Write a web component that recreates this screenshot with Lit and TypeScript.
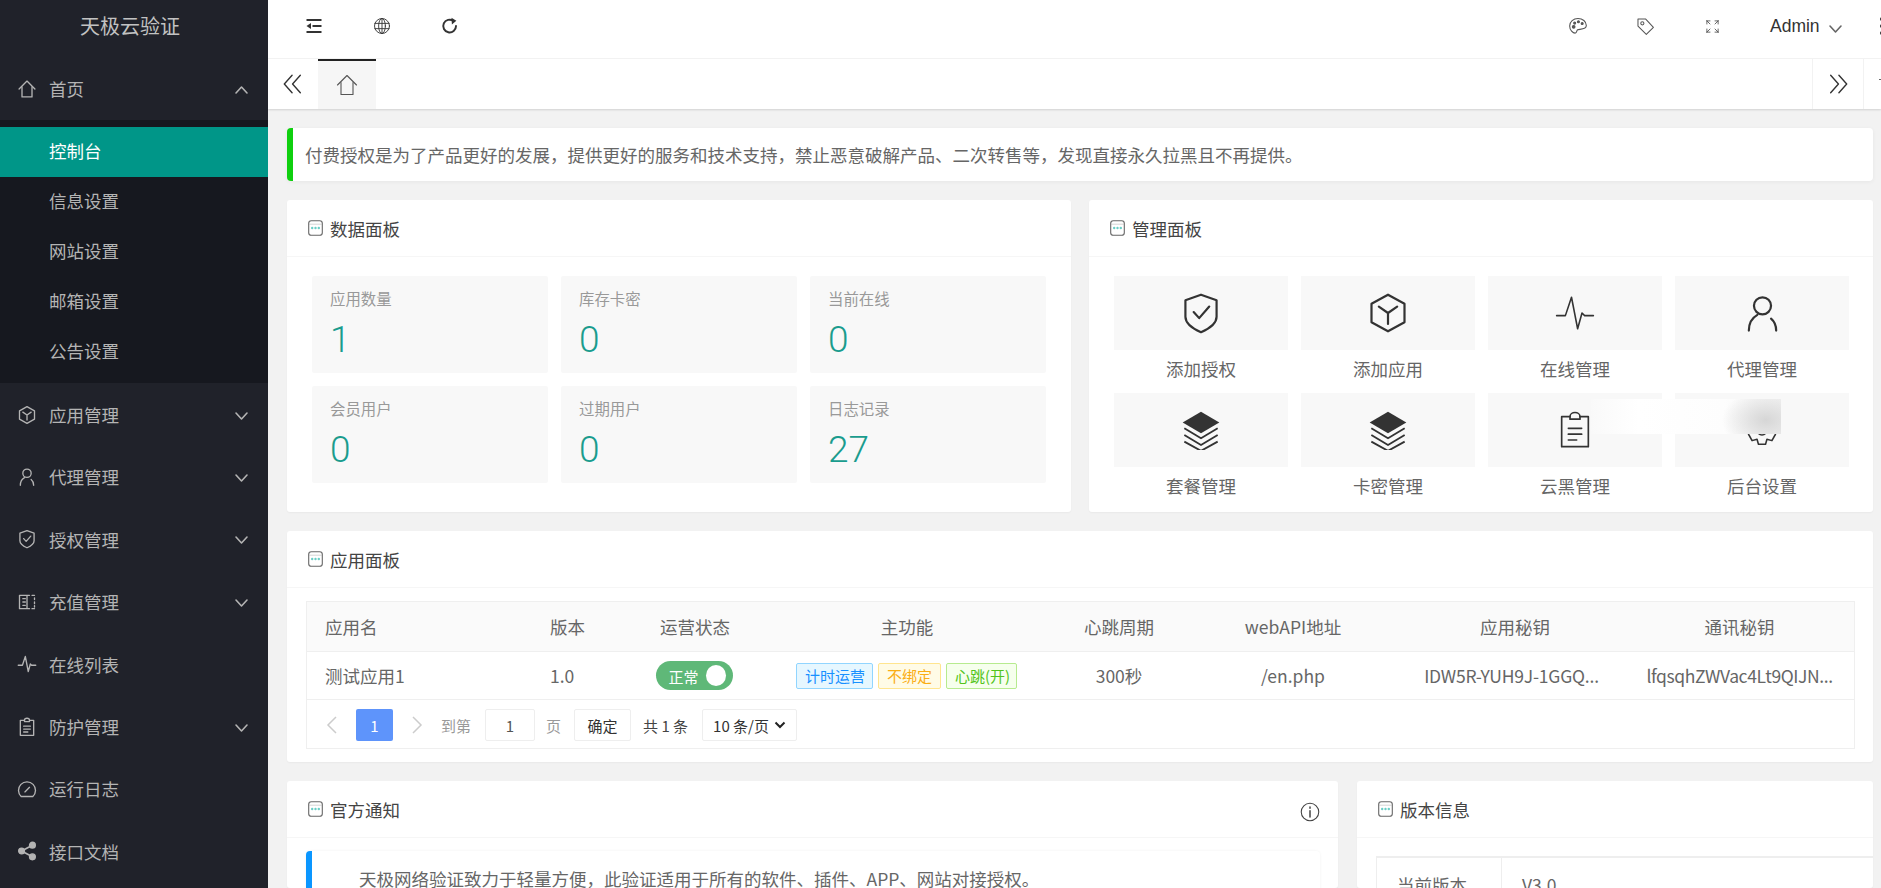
import { LitElement, html, css, svg } from "lit";
import { customElement } from "lit/decorators.js";

const S = (size: number, body: unknown, w = 1.6, vb = 24, h?: number) => html`<svg class="ic" width=${size} height=${h ?? size} viewBox="0 0 ${vb} ${vb}" fill="none" stroke="currentColor" stroke-width=${w} stroke-linecap="round" stroke-linejoin="round">${body}</svg>`;

const P: Record<string, unknown> = {
  home: svg`<path d="M2.5 12 12 2.5 21.5 12"/><path d="M6 9.5V21.5H18V9.5"/>`,
  cube: svg`<path d="M12 2 21 7V17L12 22 3 17V7Z"/><path d="M7 8.5 12 12 17 8.5M12 12V18"/>`,
  user: svg`<circle cx="12" cy="7.5" r="5"/><path d="M4 22C4 17.5 6 14.5 9 12.8M20 22C20 18.5 18.8 16.5 17 15"/>`,
  shield: svg`<path d="M12 2 20.5 5V14C20.5 18 16.5 20.5 12 22.5 7.5 20.5 3.5 18 3.5 14V5Z"/><path d="M8 11.500 11 14.800 16.500 8.500"/>`,
  book: svg`<path d="M3 4H12V20H3ZM12 4H15M12 20H15M18 4H21M18 20H21M21 7V9M21 12V14M21 16.5V18M7 8H10M7 12H10M7 16H10"/>`,
  pulse: svg`<path d="M1.5 13.5H6.5L10 3 13.5 21 16 12 17.5 13.5H22.5"/>`,
  clip: svg`<path d="M9 4H4V22H20V4H15"/><path d="M9 5.5V4C9 2.5 10.5 1.5 12 1.5S15 2.5 15 4V5.5Z"/><path d="M8 11H16M8 14.5H16M8 18H13"/>`,
  gauge: svg`<path d="M5 21A10.2 10.2 0 1 1 19 21Z"/><path d="M9.5 15.5 15 10"/>`,
  share: svg`<circle cx="5.5" cy="12" r="3.5" fill="currentColor"/><circle cx="18.5" cy="5" r="3.5" fill="currentColor"/><circle cx="18.5" cy="19" r="3.5" fill="currentColor"/><path d="M5.5 12 18.5 5M5.5 12 18.5 19" stroke-width="2"/>`,
  globe: svg`<circle cx="12" cy="12" r="10"/><ellipse cx="12" cy="12" rx="4.5" ry="10"/><path d="M12 2V22M2.5 8.5H21.5M2.5 15.5H21.5"/>`,
  refresh: svg`<path d="M20 12A8.5 8.5 0 1 1 16.5 5.2" stroke-width="2.6"/><path d="M14 1 20.5 5 14.5 10Z" fill="currentColor" stroke="none"/>`,
  fold: svg`<path d="M2 4H22M10 12H22M2 20H22" stroke-width="2.4" stroke-linecap="butt"/><path d="M2 12 8 8V16Z" fill="currentColor" stroke="none"/>`,
  palette: svg`<path d="M12 3C6.5 3 2 7 2 12C2 17 6 20.5 8.5 20.5C11 20.5 10 17.5 11.5 16.5C13.5 15.5 22 17 22 11.5C22 6.5 17.5 3 12 3Z"/><circle cx="6.8" cy="13" r="1.6" fill="currentColor"/><circle cx="8" cy="8.5" r="1.2" fill="currentColor"/><circle cx="12.5" cy="6.8" r="1.2" fill="currentColor"/><circle cx="17" cy="9" r="1.2" fill="currentColor"/>`,
  tag: svg`<path d="M2.5 2.5H12L22 13 13 22 2.5 11.5Z"/><circle cx="8" cy="8" r="2"/>`,
  full: svg`<path d="M3 3H8M3 3V8M3 3 8 8M21 3H16M21 3V8M21 3 16 8M3 21H8M3 21V16M3 21 8 16M21 21H16M21 21V16M21 21 16 16" stroke-width="1.4"/>`,
  info: svg`<circle cx="12" cy="12" r="10.5"/><path d="M12 10.5V18M12 6V7.5" stroke-width="1.8"/>`,
  dbleft: svg`<path d="M11 2.5 2.5 12 11 21.5M20 2.5 11.5 12 20 21.5"/>`,
  dbright: svg`<path d="M4 2.5 12.5 12 4 21.5M13 2.5 21.5 12 13 21.5"/>`,
  layers: svg`<path d="M12 1 23 7.500 12 14 1 7.500Z" fill="currentColor" stroke="none"/><path d="M2 11 12 17 22 11M2 15 12 21 22 15M2 19 12 24.500 22 19" stroke-linecap="butt"/>`,
  gear: svg`<path d="M9.5 2H14.5L15.5 5.5 19 4.5 21.5 9 19 11.500 21.500 15 19 19.500 15.500 18.500 14.500 22H9.500L8.500 18.500 5 19.500 2.500 15 5 11.500 2.500 9 5 4.500 8.500 5.500Z"/><circle cx="12" cy="12" r="3.500"/>`,
};

const down = svg`<path d="M2 2 7.500 8 13 2"/>`;
const up = svg`<path d="M2 8 7.500 2 13 8"/>`;
const chev = (b: unknown) => html`<svg class="chev" width="15" height="10" viewBox="0 0 15 10" fill="none" stroke="currentColor" stroke-width="1.6" stroke-linecap="round" stroke-linejoin="round">${b}</svg>`;

const cardIcon = html`<svg class="cardic" width="15" height="16" viewBox="0 0 15 16" fill="none"><rect x=".7" y=".7" width="13.6" height="14.6" rx="2.6" stroke="#666" stroke-width="1.1"/><path d="M1 4.200H14" stroke="#bbb" stroke-width=".6"/><circle cx="4.200" cy="8" r="1.200" fill="#6ccfc7"/><circle cx="7.500" cy="8" r="1.200" fill="#6ccfc7"/><circle cx="10.800" cy="8" r="1.200" fill="#6ccfc7"/></svg>`;

@customElement("app-root")
export class AppRoot extends LitElement {
  static styles = css`
    :host { display: block; width: 1881px; height: 888px; overflow: hidden; background: #f2f2f2; font-family: "Noto Sans CJK SC", "Liberation Sans", sans-serif; font-size: 17.5px; color: #666; }
    .ic { display: block; flex: none; }
    .app { display: flex; height: 888px; }
    .side { width: 268px; flex: none; background: #20222a; color: #b4b4b4; display: flex; flex-direction: column; overflow: hidden; }
    .logo { height: 50px; margin-bottom: 8px; flex: none; display: flex; align-items: center; justify-content: center; font-size: 20px; color: #c2c2c2; padding-right: 8px; }
    .row { height: 62.4px; flex: none; display: flex; align-items: center; padding-left: 17px; position: relative; }
    .row .label { margin-left: 12px; }
    .row.home .label { margin-bottom: 2px; }
    .row .chev { position: absolute; left: 234px; top: 50%; margin-top: -4px; }
    .sub { flex: none; background: #16181f; padding: 7px 0 6px; display: flex; flex-direction: column; }
    .sub div { height: 50px; box-sizing: border-box; padding: 0 0 3px 49px; display: flex; align-items: center; }
    .sub .on { background: #009688; color: #fff; }
    .main { flex: 1; min-width: 0; display: flex; flex-direction: column; overflow: hidden; }
    .top { height: 59px; flex: none; box-sizing: border-box; background: #fff; border-bottom: 1px solid #f4f4f4; display: flex; align-items: center; color: #333; }
    .top .left { display: flex; align-items: center; gap: 50px; margin-left: 37px; margin-top: -6px; }
    .top .right { display: flex; align-items: center; margin-left: auto; margin-top: -6px; width: 313px; color: #555; position: relative; }
    .admin { font-size: 17.5px; color: #333; margin-left: 50px; font-family: "Liberation Sans", sans-serif; }
    .dots { display: flex; flex-direction: column; gap: 3px; margin-left: 37px; flex: none; }
    .dots i { width: 4px; height: 4px; background: #333; border-radius: 50%; display: block; }
    .tabs { height: 50px; flex: none; background: #fff; box-shadow: 0 1px 2px rgba(0,0,0,.14); display: flex; align-items: stretch; position: relative; z-index: 1; }
    .tabs .btn { display: flex; align-items: center; justify-content: center; color: #333; }
    .tabs .prev { width: 50px; }
    .tabs .tab { width: 58px; background: #f6f6f6; border-top: 2px solid #222; display: flex; align-items: center; justify-content: center; color: #555; box-sizing: border-box; }
    .tabs .next { width: 50px; margin-left: auto; border-left: 1px solid #f2f2f2; border-right: 1px solid #f2f2f2; }
    .tabs .end { width: 17px; justify-content: flex-end; align-items: flex-start; }
    .tabs .end i { display: block; width: 2px; height: 1px; background: #666; margin-top: 20px; }
    .content { flex: 1; padding: 19px 8px 0 19px; display: flex; flex-direction: column; gap: 19px; overflow: hidden; }
    .alert { flex: none; height: 53px; background: #fff; border-left: 6px solid #0fd00f; border-radius: 4px; box-shadow: 0 1px 4px rgba(0,0,0,.05); display: flex; align-items: center; padding-left: 12px; box-sizing: border-box; color: #666; }
    .card { background: #fff; border-radius: 3px; box-shadow: 0 1px 2px rgba(0,0,0,.04); box-sizing: border-box; overflow: hidden; }
    .head { height: 57px; border-bottom: 1px solid #f6f6f6; display: flex; align-items: center; padding: 0 18px 0 21px; color: #444; box-sizing: border-box; }
    .head .cardic { margin-right: 7px; }
    .head .tail { margin-left: auto; margin-top: 5px; color: #444; }
    .two { display: grid; grid-template-columns: 784px 784px; gap: 18px; flex: none; height: 312px; }
    .stats { display: grid; grid-template-columns: repeat(3, 1fr); grid-auto-rows: 97px; gap: 13px; padding: 19px 25px 0; }
    .stat { background: #f8f8f8; padding: 10px 18px; border-radius: 2px; box-sizing: border-box; }
    .stat .k { font-size: 15.4px; color: #999; line-height: 24px; }
    .stat .v { font-family: Roboto, sans-serif; font-weight: 300; font-size: 37px; line-height: 46px; color: #1a9c8e; margin-top: 7px; }
    .mgr { display: grid; grid-template-columns: repeat(4, 174px); column-gap: 13px; padding: 19px 25px 0; position: relative; }
    .m .tile { height: 74px; background: #f8f8f8; display: flex; align-items: center; justify-content: center; color: #333; }
    .m .t { height: 43px; box-sizing: border-box; padding-bottom: 7px; display: flex; align-items: center; justify-content: center; color: #666; }
    .smudge { position: absolute; left: 502px; top: 142px; width: 190px; height: 35px; background: radial-gradient(ellipse 44px 30px at 92% 60%, #d6d6d6, rgba(248,248,248,0) 100%), linear-gradient(90deg, #f9f9f9, #fff 25%, #fdfdfd 70%, #f4f4f4); }
    .app-card { flex: none; height: 231px; }
    .tbl { margin: 13px 18px 0 19px; border: 1px solid #efefef; box-sizing: border-box; height: 148px; }
    .tr { display: grid; grid-template-columns: 225px 101px 124px 300px 124px 224px 220px 1fr; align-items: center; border-bottom: 1px solid #efefef; box-sizing: border-box; }
    .tr > div { text-align: center; white-space: nowrap; overflow: hidden; text-overflow: ellipsis; }
    .tr .l { text-align: left; padding-left: 18px; }
    .th { height: 50px; background: #fafafa; }
    .td { height: 48px; }
    .tr .k1 { padding: 0 17px 0 10px; letter-spacing: -.2px; }
    .tr .k2 { padding: 0 10px; letter-spacing: -.4px; }
    .sw { position: relative; display: block; width: 77px; height: 29px; margin: 0 auto; left: -1px; background: #5fb878; border-radius: 15px; color: #fff; font-size: 15px; line-height: 31px; text-align: left; padding-left: 13px; box-sizing: border-box; }
    .sw i { position: absolute; right: 7px; top: 4px; width: 20px; height: 21px; border-radius: 50%; background: #fff; }
    .tags { display: flex; gap: 5px; padding-left: 39px; font-size: 15px; }
    .tag { height: 26px; line-height: 24px; box-sizing: border-box; border: 1px solid; border-radius: 2px; padding: 0 8px; white-space: nowrap; }
    .b { background: #e6f7ff; border-color: #91d5ff; color: #1890ff; width: 77px; }
    .o { background: #fffbe6; border-color: #ffe58f; color: #faad14; width: 63px; }
    .g { background: #f6ffed; border-color: #b7eb8f; color: #52c41a; width: 71px; }
    .pager { height: 48px; box-sizing: border-box; padding-top: 2px; display: flex; align-items: center; font-size: 15px; color: #666; }
    .pager .arrow { width: 49px; display: flex; justify-content: center; color: #ccc; }
    .pager .arrow.n { width: 48px; }
    .pager .cur { width: 37px; height: 32px; background: #5e94fb; color: #fff; border-radius: 2px; display: flex; align-items: center; justify-content: center; }
    .pager .box { height: 32px; border: 1px solid #eee; box-sizing: border-box; border-radius: 2px; display: flex; align-items: center; justify-content: center; color: #555; }
    .pager .go { color: #999; width: 44px; }
    .pager .in { width: 50px; }
    .pager .pg { color: #999; margin: 0 13px 0 11px; }
    .pager .ok { width: 57px; color: #333; }
    .pager .tot { margin: 0 14px 0 12px; color: #444; white-space: nowrap; }
    .pager .sel { width: 95px; color: #333; gap: 5px; }
    .three { display: grid; grid-template-columns: 1051px 516px; gap: 19px; flex: 1; min-height: 0; }
    .notice { margin: 13px 18px 0 19px; height: 80px; border-left: 6px solid #0a96ff; border-radius: 4px; box-shadow: 0 0 3px rgba(0,0,0,.06); padding: 15px 0 0 47px; box-sizing: border-box; color: #666; }
    .vtbl { margin: 18px 0 0 19px; border-top: 2px solid #eee; border-left: 1px solid #eee; display: grid; grid-template-columns: 125px 1fr; height: 60px; }
    .vtbl div { padding: 14px 0 0 20px; }
    .vtbl .a { border-right: 1px solid #eee; }
    .tg { margin-left: 48px; }
    .fl { margin-left: 50px; }
    .ac { margin-left: 8px; color: #666; }
  `;

  render() {
    const rows: [string, string, boolean][] = [
      ["cube", "应用管理", true], ["user", "代理管理", true], ["shield", "授权管理", true], ["book", "充值管理", true],
      ["pulse", "在线列表", false], ["clip", "防护管理", true], ["gauge", "运行日志", false], ["share", "接口文档", false],
    ];
    const stats = [["应用数量", "1"], ["库存卡密", "0"], ["当前在线", "0"], ["会员用户", "0"], ["过期用户", "0"], ["日志记录", "27"]];
    const mgr: [string, string, number, number][] = [
      ["shield", "添加授权", 44, 1.2], ["cube", "添加应用", 44, 1.2], ["pulse", "在线管理", 42, .9], ["user", "代理管理", 41, 1.3],
      ["layers", "套餐管理", 40, 1.1], ["layers", "卡密管理", 40, 1.1], ["clip", "云黑管理", 40, 1], ["gear", "后台设置", 34, 1.1],
    ];
    return html`<div class="app">
      <aside class="side">
        <div class="logo">天极云验证</div>
        <div class="row home">${S(20, P.home, 1.6)}<span class="label">首页</span>${chev(up)}</div>
        <div class="sub">
          <div class="on">控制台</div><div>信息设置</div><div>网站设置</div><div>邮箱设置</div><div>公告设置</div>
        </div>
        ${rows.map(([i, t, c]) => html`<div class="row">${S(20, P[i], 1.6)}<span class="label">${t}</span>${c ? chev(down) : ""}</div>`)}
      </aside>
      <div class="main">
        <div class="top">
          <div class="left">${S(18, P.fold)}${S(18, P.globe, 1.2)}${S(18, P.refresh)}</div>
          <div class="right">
            <span>${S(20, P.palette, 1.3)}</span>
            <span class="tg">${S(19, P.tag, 1.3)}</span>
            <span class="fl">${S(15, P.full, 1.3)}</span>
            <span class="admin">Admin</span>
            <span class="ac">${chev(down)}</span>
            <span class="dots"><i></i><i></i><i></i></span>
          </div>
        </div>
        <div class="tabs">
          <div class="btn prev">${S(22, P.dbleft, 1.5)}</div>
          <div class="tab">${S(24, P.home, 1.1)}</div>
          <div class="btn next">${S(22, P.dbright, 1.5)}</div>
          <div class="btn end"><i></i></div>
        </div>
        <div class="content">
          <div class="alert">付费授权是为了产品更好的发展，提供更好的服务和技术支持，禁止恶意破解产品、二次转售等，发现直接永久拉黑且不再提供。</div>
          <div class="two">
            <div class="card">
              <div class="head">${cardIcon}数据面板</div>
              <div class="stats">${stats.map(([k, v]) => html`<div class="stat"><div class="k">${k}</div><div class="v">${v}</div></div>`)}</div>
            </div>
            <div class="card">
              <div class="head">${cardIcon}管理面板</div>
              <div class="mgr">
                ${mgr.map(([i, t, s, w]) => html`<div class="m"><div class="tile">${S(s, P[i], w)}</div><div class="t">${t}</div></div>`)}
                <div class="smudge"></div>
              </div>
            </div>
          </div>
          <div class="card app-card">
            <div class="head">${cardIcon}应用面板</div>
            <div class="tbl">
              <div class="tr th"><div class="l">应用名</div><div class="l">版本</div><div>运营状态</div><div>主功能</div><div>心跳周期</div><div>webAPI地址</div><div>应用秘钥</div><div>通讯秘钥</div></div>
              <div class="tr td">
                <div class="l">测试应用1</div><div class="l">1.0</div>
                <div><span class="sw">正常<i></i></span></div>
                <div class="tags"><span class="tag b">计时运营</span><span class="tag o">不绑定</span><span class="tag g">心跳(开)</span></div>
                <div>300秒</div><div>/en.php</div>
                <div class="k1">IDW5R-YUH9J-1GGQ...</div><div class="k2">lfqsqhZWVac4Lt9QIJN...</div>
              </div>
              <div class="pager">
                <span class="arrow"><svg width="12" height="20" viewBox="0 0 12 20" fill="none" stroke="currentColor" stroke-width="1.5"><path d="M10 2 2 10 10 18"/></svg></span>
                <span class="cur">1</span>
                <span class="arrow n"><svg width="12" height="20" viewBox="0 0 12 20" fill="none" stroke="currentColor" stroke-width="1.5"><path d="M2 2 10 10 2 18"/></svg></span>
                <span class="go">到第</span>
                <span class="box in">1</span>
                <span class="pg">页</span>
                <span class="box ok">确定</span>
                <span class="tot">共 1 条</span>
                <span class="box sel">10 条/页 <svg width="12" height="8" viewBox="0 0 12 8" fill="none" stroke="#222" stroke-width="2"><path d="M1.500 1.500 6 6 10.500 1.500"/></svg></span>
              </div>
            </div>
          </div>
          <div class="three">
            <div class="card">
              <div class="head">${cardIcon}官方通知<span class="tail">${S(20, P.info, 1.3)}</span></div>
              <div class="notice">天极网络验证致力于轻量方便，此验证适用于所有的软件、插件、APP、网站对接授权。</div>
            </div>
            <div class="card">
              <div class="head">${cardIcon}版本信息</div>
              <div class="vtbl"><div class="a">当前版本</div><div>V3.0</div></div>
            </div>
          </div>
        </div>
      </div>
    </div>`;
  }
}
